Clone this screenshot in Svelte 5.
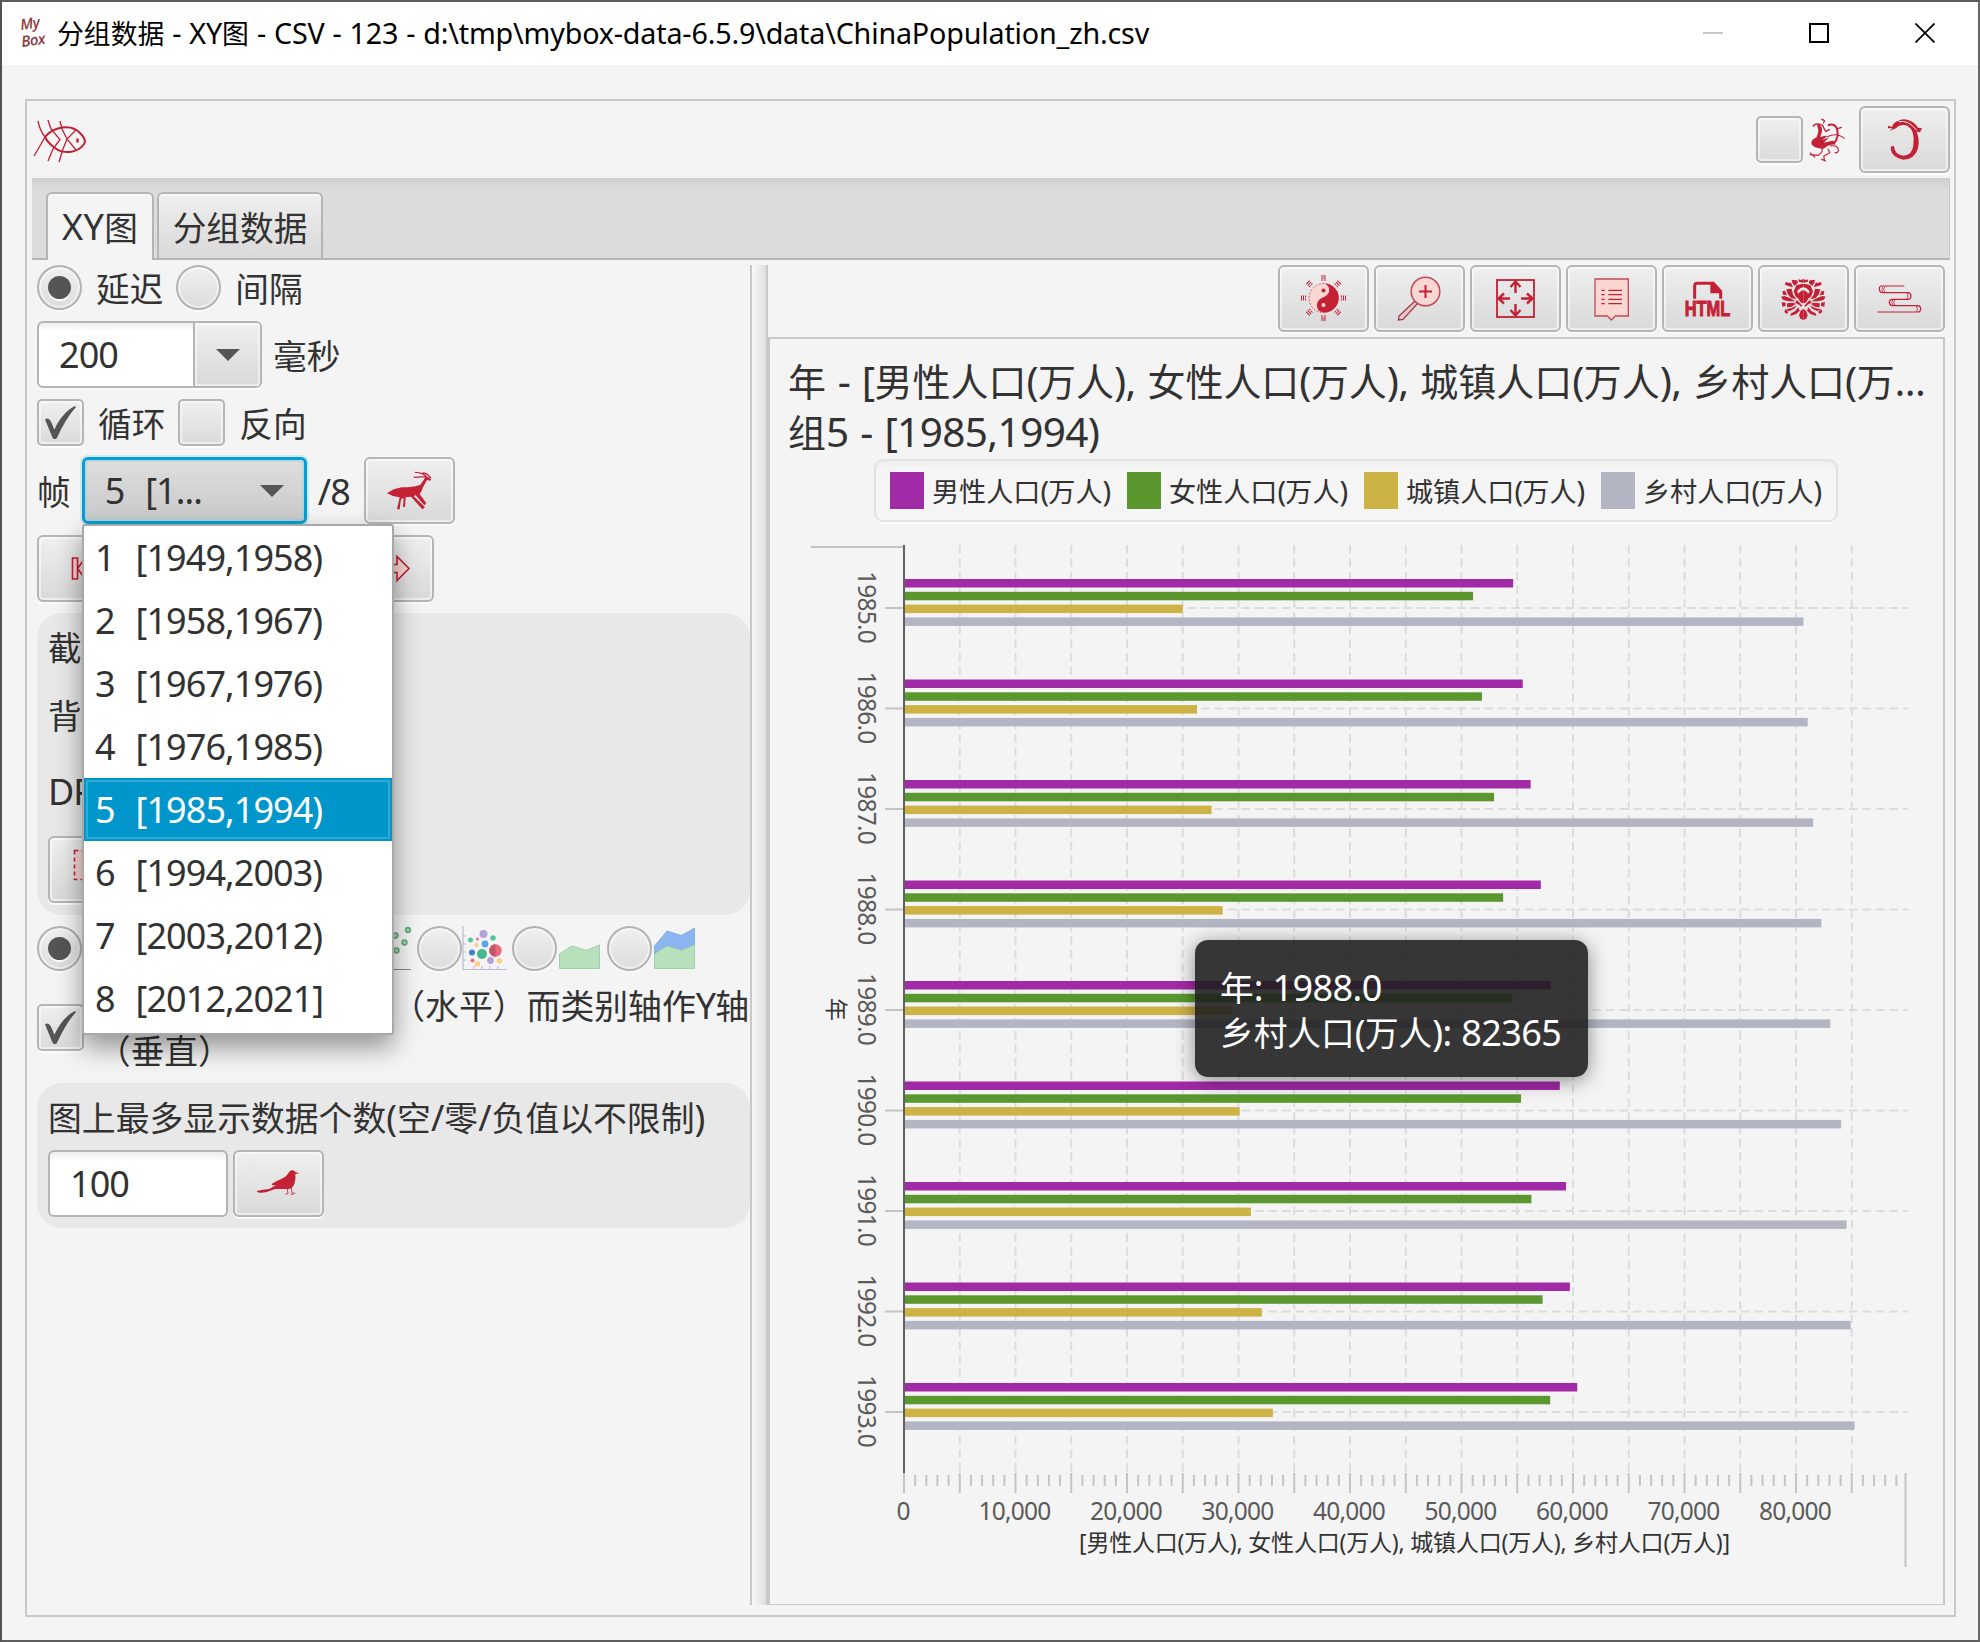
<script>
  const groups = [
    '1  [1949,1958)', '2  [1958,1967)', '3  [1967,1976)', '4  [1976,1985)',
    '5  [1985,1994)', '6  [1994,2003)', '7  [2003,2012)', '8  [2012,2021]'
  ];
  const selected = 4;

  const series = [
    { name: '男性人口(万人)', color: '#a12aa6', cls: 'male' },
    { name: '女性人口(万人)', color: '#5a982f', cls: 'female' },
    { name: '城镇人口(万人)', color: '#cdb246', cls: 'urban' },
    { name: '乡村人口(万人)', color: '#b3b5c3', cls: 'rural' }
  ];
  const rows = [
    ['1985.0', 54725, 51126, 25094, 80757],
    ['1986.0', 55581, 51926, 26366, 81141],
    ['1987.0', 56290, 53010, 27674, 81626],
    ['1988.0', 57201, 53825, 28661, 82365],
    ['1989.0', 58099, 54605, 29540, 83164],
    ['1990.0', 58904, 55429, 30195, 84138],
    ['1991.0', 59466, 56357, 31203, 84620],
    ['1992.0', 59811, 57360, 32175, 84996],
    ['1993.0', 60472, 58045, 33173, 85344]
  ];

  // plot geometry
  const x0 = 904;
  const unit = 11.15 / 1000;
  const yTop = 545;
  const yBottom = 1473;
  const xOf = (v) => x0 + v * unit;
  const yOf = (i) => 608 + i * 100.5;
  const majors = Array.from({ length: 18 }, (_, i) => i * 5000);
  const minors = Array.from({ length: 90 }, (_, i) => i * 1000).filter((v) => v % 5000);
  const labels = Array.from({ length: 9 }, (_, i) => i * 10000);

  const trigrams = Array.from({ length: 8 }, (_, i) => i * 45);

  // splits a label into Han and Latin runs so that each gets its own size
  const runs = (s) => s.match(/[\u3000-\u9fff\uff00-\uffef]+|[^\u3000-\u9fff\uff00-\uffef]+/g) ?? [];
  const isHan = (s) => /[\u3000-\u9fff\uff00-\uffef]/.test(s);
</script>

{#snippet mix(text)}{#each runs(text) as r}<span class={isHan(r) ? 'han' : 'lat'}>{r}</span>{/each}{/snippet}

{#snippet tick()}
  <svg class="tick" viewBox="0 0 30 32"><path d="M0 13 C2 11 5 12 7 18 L9 23 C14 12 21 4 29 0 L30 1 C23 9 17 19 12 30 C11 33 8 33 7 30 Z" /></svg>
{/snippet}

{#snippet halfPeony()}
  <path d="M67 20L54 18L52 10L60 12L67 9ZM50 22L40 30L34 20L32 12L42 12L50 14ZM30 20L36 34L22 30L12 26L14 18L22 20ZM60 24L46 28L38 46L44 62L50 66L54 56L48 46L58 36L67 34L67 24ZM32 38L36 56L46 70L30 66L20 54L16 40ZM12 44L18 58L6 56L4 46ZM10 60L26 66L44 76L24 76L6 72L0 62ZM67 42L56 48L50 58L52 68L60 80L67 82ZM48 72L56 80L64 90L60 92L54 86L42 80ZM2 78L14 80L14 90L4 92ZM18 82L38 80L44 84L32 92L18 94ZM48 88L40 98L24 106L16 100L32 96ZM14 98L10 108L18 114L22 108ZM52 94L56 104L46 114L28 120L30 112L42 106ZM67 98L58 106L54 118L58 128L67 132Z" />
{/snippet}

<div class="window">
  <header class="titlebar">
    <svg class="logo" viewBox="0 0 30 31">
      <text x="1" y="13" transform="rotate(-8 1 13)">My</text>
      <text x="2" y="30" transform="rotate(-8 2 30)">Box</text>
    </svg>
    <div class="title">{@render mix('分组数据 - XY图 - CSV - 123 - d:\\tmp\\mybox-data-6.5.9\\data\\ChinaPopulation_zh.csv')}</div>
    <div class="winbtns">
      <svg viewBox="0 0 20 20"><path d="M0 10H20" stroke="#c8c8c8" stroke-width="2" /></svg>
      <svg viewBox="0 0 20 20"><rect x="1" y="1" width="18" height="18" fill="none" stroke="#000" stroke-width="2" /></svg>
      <svg viewBox="0 0 20 20"><path d="M.5 .5L19.5 19.5M19.5 .5L.5 19.5" stroke="#000" stroke-width="1.8" /></svg>
    </div>
  </header>

  <div class="panel">
    <div class="tools">
      <svg class="fish" viewBox="0 0 54 46">
        <path d="M12 19C20 9 38 5 47 15Q54 22 51 26C44 36 30 36 22 30Q15 25 12 19" stroke-width="2" />
        <path d="M5 3Q7 13 12 19Q7 28 1 38M15 2L18 11L27 21.500L20 31L15 43M27 3L29 11L34 21L43 32M26 44L30 31L34 21L43 12" stroke-width="1.300" />
        <path d="M44.500 20.500v4" stroke-width="2.400" />
      </svg>
      <div class="grow"></div>
      <div class="check"></div>
      <svg class="phoenix" viewBox="0 0 110 132">
        <path class="f" d="M26 18Q42 24 38 42Q34 52 34 58Q44 52 54 54L40 66L60 58L44 74L70 68Q80 70 78 80Q60 78 44 92Q14 92 7 78Q4 66 22 58Q32 40 24 24Z" />
        <path class="l" d="M34 20Q16 14 12 26M26 20Q40 16 44 30L50 40L62 34M36 4Q52 6 42 16" stroke-width="4" />
        <path class="l" d="M56 22Q76 14 84 34Q90 60 74 76" stroke-width="6" />
        <path class="l" d="M84 32L98 28M54 56Q84 42 106 62M62 84Q88 80 88 98Q86 106 76 104M36 90Q46 98 28 112L2 110M2 104L18 118M56 92L62 104L44 114L46 130M36 124L50 128" stroke-width="3.500" />
      </svg>
      <button class="btn dragonbtn"><svg class="icon" viewBox="0 0 135 135">
        <path class="f" d="M18 26L30 30Q34 16 48 12Q62 2 80 10Q98 16 108 32L120 34L114 46L104 44Q114 70 108 94Q98 128 64 128Q30 122 26 96Q26 84 36 88Q38 114 64 116Q92 114 94 84Q100 40 76 26Q56 20 42 34L22 42L32 34L18 34Z" />
        <path d="M50 14Q80 8 104 40" stroke="#ececec" stroke-width="3" fill="none" />
      </svg></button>
    </div>

    <nav class="tabs">
      <div class="tab active">{@render mix('XY图')}</div>
      <div class="tab second">{@render mix('分组数据')}</div>
    </nav>

    <main>
      <section class="left">
        <div class="row h45">
          <div class="radio on"></div><div class="lbl l14">{@render mix('延迟')}</div>
          <div class="radio l12"></div><div class="lbl l14">{@render mix('间隔')}</div>
        </div>
        <div class="row h67">
          <div class="combo editable"><div class="value">{@render mix('200')}</div><div class="drop"><i></i></div></div>
          <div class="lbl l11">{@render mix('毫秒')}</div>
        </div>
        <div class="row h47">
          <div class="check">{@render tick()}</div><div class="lbl l14">{@render mix('循环')}</div>
          <div class="check l12"></div><div class="lbl l14">{@render mix('反向')}</div>
        </div>
        <div class="row h67">
          <div class="lbl">{@render mix('帧')}</div>
          <div class="combo frame"><div class="value">{@render mix('5  [1...')}</div><i></i></div>
          <div class="lbl slash">{@render mix('/8')}</div>
          <button class="btn"><svg class="icon" viewBox="0 0 135 135">
            <path class="f" d="M0 76L20 64L44 58Q80 58 100 50L110 36L116 24L132 32L130 38L120 36L108 58Q104 72 98 78L118 106L112 112L86 82L80 84L114 118L106 124L72 86L56 88L54 118L48 116L50 90L42 94L38 124L30 124L38 88L18 84Z" />
            <path class="l" d="M118 26L80 28M118 26Q110 14 84 13M108 14L120 18L132 30" stroke-width="4" />
          </svg></button>
        </div>
        <div class="row h67">
          <button class="btn"><svg class="icon" viewBox="0 0 45 45"><path class="p" d="M12.500 12h5v21h-5zM17.500 22.500l8-11v6h9v10h-9v6z" /></svg></button>
          <button class="btn lastbtn"><svg class="icon" viewBox="0 0 45 45"><path class="p" d="M8 18.500h23v-8l12 12l-12 12v-8h-23z" /></svg></button>
        </div>
        <div class="card snap">
          <div class="lbl">{@render mix('截图')}</div>
          <div class="lbl">{@render mix('背景')}</div>
          <div class="lbl dpi">{@render mix('DPI')}</div>
          <button class="btn"><svg class="icon" viewBox="0 0 45 45"><path d="M3.500 3.500h36v29h-36z" fill="#fbd7d2" stroke="#c12034" stroke-width="1.600" stroke-dasharray="4 3" /></svg></button>
        </div>
        <div class="row h45">
          <div class="radio on"></div>
          <div class="grow"></div>
          <svg class="kind" viewBox="0 0 45 45"><path d="M1 0V43.500H45" fill="none" stroke="#8087a5" stroke-width="1.200" />
            <g fill="#a5d3ae" stroke="#5aa873" stroke-width="1.500"><circle cx="42" cy="4" r="2.400" /><circle cx="29.500" cy="9.500" r="2.400" /><circle cx="38.500" cy="16.500" r="2.400" /><circle cx="30.500" cy="24.500" r="2.400" /></g></svg>
          <div class="radio l6"></div>
          <svg class="kind" viewBox="0 0 45 45"><path d="M1 0V43.500H45M1 10h3M1 18h3M1 26h3M1 34h3M12 43v-3M20 43v-3M28 43v-3M36 43v-3" fill="none" stroke="#bdb9d6" stroke-width="1.200" />
            <circle cx="21.500" cy="8" r="4" fill="#b8a3d6" /><circle cx="8.500" cy="14" r="2.500" fill="#52c79a" /><circle cx="15.500" cy="13" r="1.500" fill="#ee6b84" /><circle cx="31" cy="12" r="2.800" fill="#52c79a" /><circle cx="14.500" cy="19" r="2.200" fill="#fcd184" /><circle cx="23" cy="18" r="3.400" fill="#59a3ef" /><circle cx="10" cy="26.500" r="3" fill="#3f83c9" /><circle cx="20" cy="28" r="5" fill="#44b98c" /><circle cx="33.500" cy="24.500" r="6.200" fill="#ea6880" /><path d="M33.500 18.300a6.200 6.200 0 0 0 0 12.400z" fill="#c25568" /><circle cx="10.500" cy="34.500" r="2" fill="#ee6b84" /><circle cx="28.500" cy="34.500" r="3.400" fill="#b8a3d6" /><circle cx="15.500" cy="38" r="2.700" fill="#fcd184" /><circle cx="37.500" cy="35" r="2.800" fill="#fcd184" /></svg>
          <div class="radio l5"></div>
          <svg class="kind" viewBox="0 0 45 45"><path d="M2.500 28L15 20L29.500 24.500L42.500 19V42.500H2.500Z" fill="#b9e0bd" stroke="#9fcfa8" /></svg>
          <div class="radio l5"></div>
          <svg class="kind" viewBox="0 0 45 45"><path d="M2.500 20L15 5L29.500 9.500L42.500 2V22L29.500 26L15 20L2.500 28Z" fill="#8bb5f0" stroke="#79a5e2" stroke-width=".8" /><path d="M2.500 28L15 20L29.500 24.500L42.500 19V42.500H2.500Z" fill="#b9e0bd" stroke="#9fcfa8" /></svg>
          <div class="tail"></div>
        </div>
        <div class="row h90">
          <div class="check">{@render tick()}</div>
          <div class="wrap">
            <div class="line first">{@render mix('（水平）而类别轴作Y轴')}</div>
            <div class="line">{@render mix('（垂直）')}</div>
          </div>
        </div>
        <div class="card limit">
          <div class="lbl">{@render mix('图上最多显示数据个数(空/零/负值以不限制)')}</div>
          <div class="row h67">
            <div class="input">{@render mix('100')}</div>
            <button class="btn bird"><svg class="icon" viewBox="0 0 135 135">
              <path class="f" d="M2 90Q20 86 40 84L60 72Q44 74 48 68Q76 54 90 46L100 32Q108 24 118 32L130 38L118 38Q120 52 116 66Q110 84 96 84L58 84L30 94Q4 98 2 90Z" />
              <path class="l" d="M94 84L96 98L88 100M106 80L108 96L118 97M104 100L112 100" stroke-width="2.500" />
            </svg></button>
          </div>
        </div>
      </section>

      <div class="divider"></div>

      <section class="right">
        <div class="toolbar">
          <button class="btn"><svg class="icon" viewBox="0 0 45 45">
            <circle cx="22.500" cy="22" r="14.500" fill="#fbd7d2" stroke="#c12034" stroke-width=".7" stroke-dasharray="2 1.500" />
            <path class="f" d="M24 7.500A14.500 14.500 0 0 1 22.500 36.500Q15 35 16 28Q17 23 23 21Q31 17 27 10Z" />
            <circle cx="22.500" cy="14.500" r="2" class="f" /><circle cx="22.500" cy="29" r="2" fill="#fbd7d2" />
            {#each trigrams as a}<path d="M20 0h5M20 2h5M20 4h2M23 4h2" stroke="#c12034" stroke-width="1" fill="none" transform="rotate({a} 22.500 22)" />{/each}
          </svg></button>
          <button class="btn"><svg class="icon" viewBox="0 0 45 45">
            <path d="M18 25L2 40L1.500 44L6 43.500L21 27" fill="#e3c9c8" stroke="#a83a48" stroke-width="1.300" />
            <circle cx="28.500" cy="15.500" r="14.300" fill="#fbd7d2" stroke="#c4495a" stroke-width="1.500" /><path class="l" d="M28.500 9v13M22 15.500h13" stroke-width="2" />
          </svg></button>
          <button class="btn"><svg class="icon" viewBox="0 0 45 45">
            <rect x="4" y="4" width="37" height="37" fill="none" stroke="#c12034" stroke-width="1.800" />
            <path class="l" d="M22.500 6V17M17.500 11L22.500 5.500L27.500 11M22.500 39V28M17.500 34L22.500 39.500L27.500 34M6 22.500H17M11 17.500L5.500 22.500L11 27.500M39 22.500H28M34 17.500L39.500 22.500L34 27.500" stroke-width="2.400" />
          </svg></button>
          <button class="btn"><svg class="icon" viewBox="0 0 135 135">
            <path d="M18 9H118V120H79L67 132L55 120H18Z" fill="#fbd7d2" stroke="#c4495a" stroke-width="4" />
            <path class="l" d="M37 43h10M58 43h41M37 56h10M58 56h41M37 70h10M58 70h41M37 83h10M58 83h41" stroke-width="3.500" />
          </svg></button>
          <button class="btn"><svg class="icon" viewBox="0 0 135 135">
            <path class="l" d="M29 68V30Q29 22 37 22H85L107 46V68" stroke-width="9" /><path class="f" d="M76 22H88L108 44V52H76Z" />
            <text class="html" x="-1" y="121" textLength="137" lengthAdjust="spacingAndGlyphs">HTML</text>
          </svg></button>
          <button class="btn"><svg class="icon" viewBox="0 0 135 135">
            <g class="f">{@render halfPeony()}</g>
            <g class="f" transform="translate(134 0) scale(-1 1)">{@render halfPeony()}</g>
          </svg></button>
          <button class="btn"><svg class="icon" viewBox="0 0 135 135">
            <path class="l" d="M82 30H14Q6 30 7 40Q8 50 18 50H94Q102 52 102 60Q102 69 94 70H44Q36 72 37 80Q38 89 46 89H122Q131 90 131 98Q131 108 122 108H2" stroke-width="3.500" />
            <path class="l" d="M24 32Q16 40 24 49M90 51Q97 60 90 69M54 71Q46 80 54 88M118 90Q125 99 118 107M18 32Q11 40 18 49M48 71Q41 80 48 88" stroke-width="2.500" />
          </svg></button>
        </div>

        <div class="chartbox">
          <div class="ctitle">{@render mix('年 - [男性人口(万人), 女性人口(万人), 城镇人口(万人), 乡村人口(万...')}</div>
          <div class="ctitle">{@render mix('组5 - [1985,1994)')}</div>
          <div class="legend">
            {#each series as s}
              <div class="item"><span class="swatch {s.cls}"></span><span>{@render mix(s.name)}</span></div>
            {/each}
          </div>
          <svg class="plot" viewBox="770 522 1173 1081">
            {#each majors.slice(1) as v}<line class="grid" x1={xOf(v)} x2={xOf(v)} y1={yTop} y2={yBottom} stroke-dasharray="8.500 5" />{/each}
            {#each rows as r, i}<line class="grid" x1={x0} x2="1908" y1={yOf(i)} y2={yOf(i)} stroke-dasharray="8.500 5" />{/each}
            {#each rows as r, i}
              <line class="axis" x1="885" x2="904" y1={yOf(i)} y2={yOf(i)} />
              {#each series as s, k}
                <rect x={x0} y={yOf(i) - 29 + k * 12.8} width={r[k + 1] * unit - 1} height="8.500" fill={s.color} />
              {/each}
              <text class="num" text-anchor="middle" transform="translate(858 {yOf(i) - 1}) rotate(90)">{r[0]}</text>
            {/each}
            <path class="axis" d="M811 547H905M1905.500 1473V1567" />
            <line x1="904" x2="904" y1="545" y2="1473" stroke="#606060" stroke-width="2" />
            {#each majors as v}<line class="axis" x1={xOf(v)} x2={xOf(v)} y1="1473" y2="1493" />{/each}
            {#each minors as v}<line class="axis" x1={xOf(v)} x2={xOf(v)} y1="1475" y2="1486" />{/each}
            {#each labels as v}<text class="num" text-anchor="middle" x={xOf(v) - 1} y="1520">{v.toLocaleString('en-US')}</text>{/each}
            <text class="cap" text-anchor="middle" transform="translate(828 1009.500) rotate(90)">年</text>
            <text class="cap" x="1079" y="1551" textLength="651" lengthAdjust="spacing">[男性人口(万人), 女性人口(万人), 城镇人口(万人), 乡村人口(万人)]</text>
          </svg>
        </div>
      </section>
    </main>
  </div>

  <div class="popup">
    {#each groups as g, i}
      <div class="opt" class:sel={i === selected}>{@render mix(g)}</div>
    {/each}
  </div>
  <div class="tooltip">
    <div>{@render mix('年: 1988.0')}</div>
    <div>{@render mix('乡村人口(万人): 82365')}</div>
  </div>
</div>

<style>
  :global(body) { margin: 0; background: #f4f4f4; }
  * { box-sizing: border-box; }
  .window {
    position: relative; width: 1980px; height: 1642px; overflow: hidden;
    display: flex; flex-direction: column;
    background: #f4f4f4; border: 2px solid #666; border-left-color: #505052; border-top-color: #5c5c5c; border-bottom-color: #5f5f5f;
    font: 36px/45px "Noto Sans", "Noto Sans CJK SC", sans-serif; color: #323232; white-space: nowrap;
  }
  .han { font-family: "Noto Sans CJK SC", sans-serif; font-size: .935em; line-height: 1; white-space: pre; }
  .lat { letter-spacing: -.026em; line-height: 1; white-space: pre; }
  .grow { flex: 1; }
  .titlebar { height: 63px; flex: none; background: #fff; display: flex; align-items: center; padding: 0 43px 2px 18px; color: #000; }
  .logo { width: 30px; height: 31px; overflow: visible; }
  .logo text { font: italic 600 15px "Open Sans", sans-serif; fill: #8d3b40; letter-spacing: -.5px; }
  .title { margin-left: 7px; font-size: 28.7px; flex: 1; }
  .title .lat { letter-spacing: -.006em; word-spacing: .7px; }
  .winbtns { display: flex; gap: 86px; }
  .winbtns svg { width: 20px; height: 20px; }

  .panel { margin: 34px 22px 23px 23px; flex: 1; border: 2px solid #c8c8c8; padding: 0 4px 10px 5px; display: flex; flex-direction: column; min-height: 0; }
  .tools { height: 77px; flex: none; display: flex; align-items: center; }
  .fish { width: 54px; height: 46px; margin: 3px 0 0 1px; }
  .fish path { fill: none; stroke: #c12034; }
  .phoenix { width: 37px; height: 44px; margin-left: 6px; }
  .dragonbtn { margin-left: 13px; }
  .f { fill: #c42136; }
  .l { fill: none; stroke: #c42136; }
  .p { fill: #fbd7d2; stroke: #c12034; stroke-width: 1.6; }
  .html { font: 700 64px "Liberation Sans", sans-serif; fill: #c42136; stroke: #c42136; stroke-width: 3px; }

  .btn {
    width: 91px; height: 67px; padding: 0; flex: none; border: 2px solid #b5b5b5; border-radius: 6px;
    background: linear-gradient(#efefef, #d9d9d9); box-shadow: inset 0 0 0 2px rgba(255,255,255,.55), 0 2px 0 #fbfbfb;
    display: flex; align-items: center; justify-content: center;
  }
  .icon { width: 45px; height: 45px; overflow: visible; }
  .check {
    width: 47px; height: 47px; flex: none; border: 2px solid #b5b5b5; border-radius: 5px;
    background: linear-gradient(#efefef, #dbdbdb); box-shadow: inset 0 0 0 2px rgba(255,255,255,.5), 0 2px 0 #fbfbfb;
    display: flex; align-items: center; justify-content: center;
  }
  .tick { width: 31px; height: 33px; fill: #555; }
  .radio {
    width: 45px; height: 45px; flex: none; border: 2px solid #b3b3b3; border-radius: 50%;
    background: linear-gradient(#f0f0f0, #dcdcdc); box-shadow: inset 0 0 0 2px rgba(255,255,255,.5), 0 2px 0 #fbfbfb;
    display: flex; align-items: center; justify-content: center;
  }
  .radio.on::after { content: ""; width: 23px; height: 23px; border-radius: 50%; background: #555; box-shadow: 0 2px 0 #fafafa; }

  .tabs {
    height: 82px; flex: none; display: flex; align-items: flex-end; padding-left: 14px; gap: 3px;
    background: linear-gradient(#cfcfcf, #dcdcdc 11px); border-bottom: 2px solid #b5b5b5; border-right: 1px solid #c8c8c8;
  }
  .tab { height: 66px; border: 2px solid #b5b5b5; border-bottom: 0; border-radius: 6px 6px 0 0; background: linear-gradient(#efefef, #d9d9d9); box-shadow: inset 0 2px 0 #f8f8f8; display: flex; align-items: center; justify-content: center; }
  .tab.active { width: 108px; height: 68px; background: #f4f4f4; margin-bottom: -2px; }
  .tab.active .lat { letter-spacing: .01em; }
  .tab.second { width: 166px; padding-top: 2px; }

  main { flex: 1; display: flex; min-height: 0; }
  .left { width: 718px; flex: none; padding: 5px 0 0 5px; display: flex; flex-direction: column; gap: 11px; }
  .row { display: flex; align-items: center; flex: none; }
  .h45 { height: 45px; } .h47 { height: 47px; } .h67 { height: 67px; } .h90 { height: 90px; }
  .l5 { margin-left: 5px; } .l6 { margin-left: 6px; } .l11 { margin-left: 11px; } .l12 { margin-left: 13px; } .l14 { margin-left: 14px; }
  .lbl { flex: none; padding-top: 1px; }
  .combo { height: 67px; border: 2px solid #b5b5b5; border-radius: 6px; display: flex; align-items: center; }
  .combo i { width: 0; height: 0; border: 12px solid transparent; border-top-color: #555; border-bottom: 0; }
  .editable { width: 225px; background: linear-gradient(#eee, #fff 9px); box-shadow: 0 2px 0 #fbfbfb; }
  .editable .value { flex: 1; padding-left: 20px; }
  .drop { width: 67px; height: 63px; border-left: 2px solid #b5b5b5; background: linear-gradient(#efefef, #d9d9d9); box-shadow: inset 0 0 0 2px rgba(255,255,255,.5); display: flex; align-items: center; justify-content: center; border-radius: 0 4px 4px 0; }
  .frame { width: 225px; margin-left: 11px; border-color: #039ed3; border-width: 3px; background: linear-gradient(#dedede, #c9c9c9); box-shadow: 0 0 0 2px rgba(3,158,211,.15), inset 0 0 0 2px rgba(160,210,225,.5); justify-content: space-between; padding: 0 20px 0 20px; }
  .frame .lat { word-spacing: 2px; }
  .slash { margin-left: 11px; width: 46px; }
  .lastbtn { margin-left: 215px; }
  .card { background: #e8e8e8; border-radius: 25px; flex: none; padding: 11px; }
  .snap { height: 302px; display: flex; flex-direction: column; }
  .snap .lbl { height: 68px; padding-top: 1px; }
  .snap .dpi { height: 76px; padding-top: 9px; }
  .kind { height: 45px; width: 45px; flex: none; }
  .tail { width: 53px; flex: none; }
  .wrap { flex: 1; padding-left: 13px; padding-top: 1px; }
  .line { height: 45px; line-height: 45px; }
  .first { text-align: right; padding-right: 1px; }
  .first .han, .limit .lbl .han { font-size: .94em; }
  .limit { height: 145px; }
  .limit .lbl { height: 56px; padding-top: 1px; }
  .limit .lbl .lat { letter-spacing: 0; }
  .input { width: 180px; height: 67px; border: 2px solid #b5b5b5; border-radius: 6px; background: linear-gradient(#eee, #fff 9px); padding-left: 20px; display: flex; align-items: center; }
  .bird { margin-left: 5px; }

  .divider { width: 18px; flex: none; border-left: 2px solid #c8c8c8; border-right: 2px solid #c8c8c8; margin-top: 5px; background: linear-gradient(90deg, #f8f8f8, #dedede); }
  .right { flex: 1; min-width: 0; padding: 5px 5px 0 0; display: flex; flex-direction: column; }
  .toolbar { height: 67px; flex: none; display: flex; justify-content: flex-end; gap: 5px; }
  .chartbox { margin-top: 5px; flex: 1; min-height: 0; border: 2px solid #c8c8c8; border-bottom-width: 1px; padding-top: 16px; }
  .ctitle { height: 51px; line-height: 51px; padding-left: 18px; font-size: 40.5px; }
  .ctitle .lat { letter-spacing: -.015em; word-spacing: 1.8px; }
  .ctitle .han, .legend .han { font-size: .938em; }
  .legend { width: 964px; height: 63px; margin: 2px 0 0 104px; border: 2px solid #e2e2e2; border-radius: 9px; background: linear-gradient(#ededed, #f5f5f5 8px); box-shadow: 0 2px 0 #fafafa; padding-left: 14px; display: flex; align-items: center; font-size: 28.900px; }
  .item { width: 237px; flex: none; display: flex; align-items: center; }
  .swatch { width: 34px; height: 37px; margin-right: 8px; }
  .male { background: #a12aa6; } .female { background: #5a982f; } .urban { background: #cdb246; } .rural { background: #b3b5c3; }
  .plot { display: block; width: 1173px; height: 1081px; }
  .grid { stroke: #dcdcdc; stroke-width: 2; }
  .axis { stroke: #c4c4c4; stroke-width: 2; fill: none; }
  .num { font-size: 24.5px; fill: #5a5a5a; letter-spacing: -.8px; }
  .cap { font: 23px "Noto Sans", "Noto Sans CJK SC", sans-serif; fill: #323232; }

  .popup { position: absolute; left: 80px; top: 522px; width: 312px; height: 511px; background: #fff; border: 2px solid #a8a8a8; border-radius: 3px; box-shadow: 0 12px 26px rgba(0,0,0,.4); padding-bottom: 2px; }
  .opt { height: 63px; line-height: 63px; padding-left: 11px; word-spacing: 2px; }
  .opt.sel { background: #0096cb; color: #fff; box-shadow: inset 0 0 0 2px #0096cb, inset 0 0 0 4px #30a9d5; }
  .tooltip { position: absolute; left: 1193px; top: 938px; width: 393px; height: 137px; border-radius: 13px; background: rgba(30,30,30,.89); color: #fff; box-shadow: 0 3px 20px rgba(0,0,0,.45); padding: 25px 0 0 25px; }
  .tooltip div { height: 45px; line-height: 45px; }
  .tooltip .lat { letter-spacing: -.016em; word-spacing: 1px; }
</style>
